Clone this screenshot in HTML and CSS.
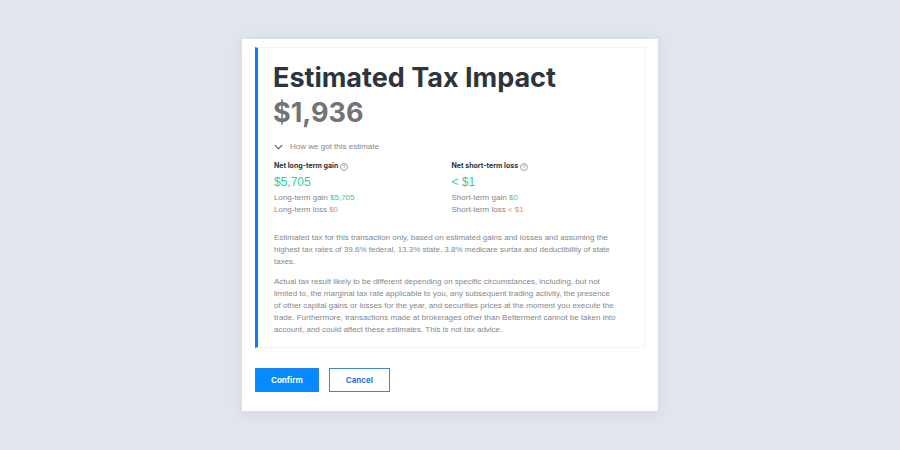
FILE: index.html
```
<!DOCTYPE html>
<html lang="en">
<head>
<meta charset="utf-8">
<title>Estimated Tax Impact</title>
<link rel="stylesheet" href="styles.css">
</head>
<body>
<main class="dialog">
  <section class="panel">
    <h1 class="title">Estimated Tax Impact</h1>
    <p class="amount">$1,936</p>
    <button class="toggle" type="button">
      <svg class="chevron" viewBox="0 0 10 6" aria-hidden="true"><path d="M1 1l4 4 4-4"/></svg>
      How we got this estimate
    </button>
    <div class="breakdown">
      <div>
        <h2 class="label">Net long-term gain
          <svg class="help" viewBox="0 0 10 10" aria-hidden="true"><circle cx="5" cy="5" r="4.4"/><path d="M3.500 4c0-2 3-1.900 3-.2C6.500 4.900 5 4.700 5 6M5 7v.8"/></svg>
        </h2>
        <p class="net">$5,705</p>
        <p class="line">Long-term gain <span class="gain">$5,705</span></p>
        <p class="line">Long-term loss <span class="loss">$0</span></p>
      </div>
      <div>
        <h2 class="label">Net short-term loss
          <svg class="help" viewBox="0 0 10 10" aria-hidden="true"><circle cx="5" cy="5" r="4.4"/><path d="M3.500 4c0-2 3-1.900 3-.2C6.500 4.900 5 4.700 5 6M5 7v.8"/></svg>
        </h2>
        <p class="net">&lt; $1</p>
        <p class="line">Short-term gain <span class="gain">$0</span></p>
        <p class="line">Short-term loss <span class="loss">&lt; $1</span></p>
      </div>
    </div>
    <p class="note">Estimated tax for this transaction only, based on estimated gains and losses and assuming the<br>highest tax rates of 39.6% federal, 13.3% state, 3.8% medicare surtax and deductibility of state<br>taxes.</p>
    <p class="note">Actual tax result likely to be different depending on specific circumstances, including, but not<br>limited to, the marginal tax rate applicable to you, any subsequent trading activity, the presence<br>of other capital gains or losses for the year, and securities prices at the moment you execute the<br>trade. Furthermore, transactions made at brokerages other than Betterment cannot be taken into<br>account, and could affect these estimates. This is not tax advice.</p>
  </section>
  <div class="actions">
    <button class="button primary" type="button">Confirm</button>
    <button class="button" type="button">Cancel</button>
  </div>
</main>
</body>
</html>
```
FILE: styles.css
```
* { box-sizing: border-box; }
body {
  margin: 0;
  min-height: 100vh;
  display: grid;
  place-items: center;
  background: #e1e5ee;
  color: #85878b;
  font-family: "Liberation Sans", sans-serif;
}
h1, h2, p { margin: 0; }
.dialog {
  width: 416px;
  max-width: 100%;
  padding: 8px 13px 19px;
  background: #fff;
  box-shadow: 0 2px 12px rgba(60, 80, 100, 0.1);
}
.panel {
  padding: 12px 15px 11px;
  border: 1px solid #f3f4f5;
  border-left: 3px solid #0f7cf8;
}
.title,
.amount {
  font-family: Inter, sans-serif;
  font-size: 27px;
  line-height: 35px;
  font-weight: 700;
  white-space: nowrap;
}
.title { color: #2d353c; }
.amount { color: #717377; }
.toggle {
  display: flex;
  align-items: center;
  gap: 7px;
  margin: 11px 0 0 1px;
  padding: 0;
  border: 0;
  background: none;
  color: #85878b;
  font: 8px/12px "Liberation Sans", sans-serif;
}
.chevron { width: 9px; height: 6px; }
.chevron path { fill: none; stroke: #4b4f55; stroke-width: 1.2; }
.breakdown {
  display: grid;
  grid-template-columns: 1fr 1fr;
  margin: 7px 0 16px 1px;
}
.label {
  display: flex;
  align-items: center;
  gap: 2px;
  color: #2b3239;
  font: 700 7px/12px Inter, sans-serif;
}
.help { width: 8px; height: 8px; margin-top: 1px; }
.help circle, .help path { fill: none; stroke: #777; stroke-width: 0.8; }
.net {
  padding-top: 1px;
  color: #2dcf9f;
  font-size: 12px;
  line-height: 19px;
}
.line { font-size: 8px; line-height: 12px; }
.gain { color: #2dcf9f; }
.loss { color: #f47f7f; }
.note {
  margin-left: 1px;
  font-size: 8px;
  line-height: 12px;
  white-space: nowrap;
}
.note + .note { margin-top: 8px; }
.actions { display: flex; gap: 10px; margin-top: 20px; }
.button {
  min-width: 61px;
  height: 24px;
  padding: 0 15px;
  border: 1px solid #3f83dc;
  background: #fff;
  color: #2f76d8;
  font: 700 8px/12px Inter, sans-serif;
}
.primary { border-color: #1f86ee; background: #058aff; color: #fff; }
```
